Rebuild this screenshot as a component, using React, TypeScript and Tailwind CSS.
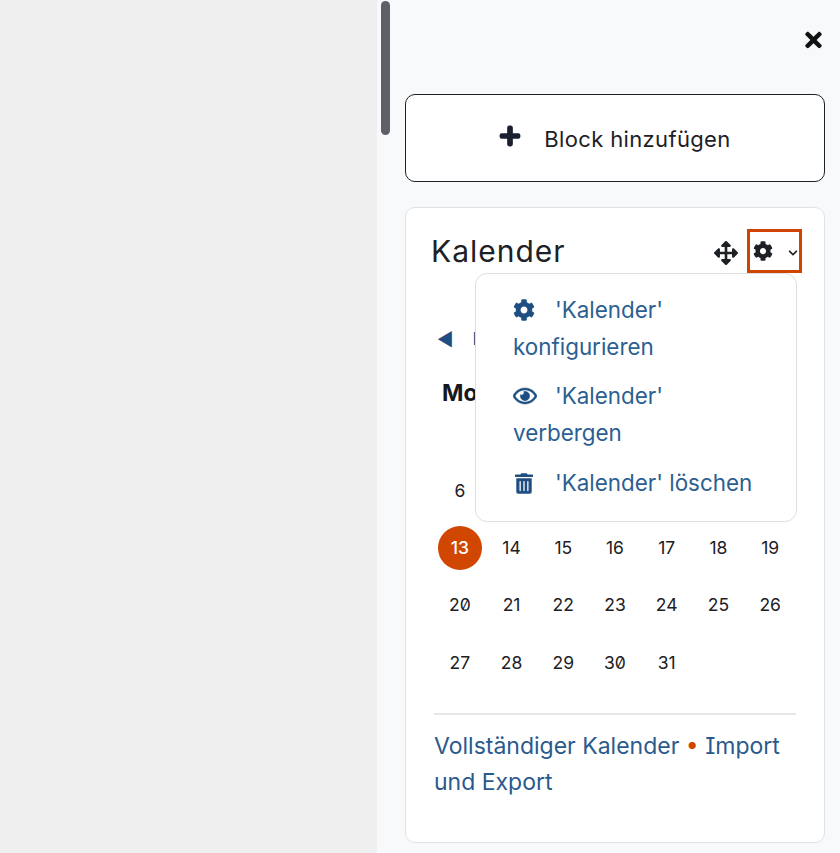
import { FaArrowsAlt, FaChevronDown, FaCog, FaPlus, FaRegEye, FaTimes, FaTrashAlt } from "react-icons/fa";

// only what shows past the open menu is filled in
const weeks = [
  ["", "", "", "", "", "", ""],
  ["6", "", "", "", "", "", ""],
  ["13", "14", "15", "16", "17", "18", "19"],
  ["20", "21", "22", "23", "24", "25", "26"],
  ["27", "28", "29", "30", "31", "", ""],
];

const days = ["Mo", "", "", "", "", "", ""];

export default function App() {
  return (
    <div className="flex h-[853px] w-[840px] overflow-hidden bg-[#efefef] font-['Inter',sans-serif] text-[#1d2125] [font-feature-settings:'cv08']">
      {/* Page behind the drawer */}
      <div className="w-[377px] shrink-0" />

      {/* Block drawer */}
      <aside className="relative flex-1 bg-[#f8f9fa] pl-7 pr-[15px]">
        <div className="absolute left-1 top-px h-[134px] w-[9px] rounded-full bg-[#5f5f68]" />

        <div className="flex h-[94px] justify-end pr-[3px] pt-[28px]">
          <FaTimes className="h-[24px] w-[17px] text-[#111]" />
        </div>

        <button className="flex h-[88px] w-full items-center justify-center gap-[23px] rounded-[10px] border border-[#1d2125] bg-white text-[22px] tracking-[0.35px] text-[#1d2125]">
          <FaPlus className="mb-1 h-[22px] w-[22px] text-[#1a2030]" stroke="currentColor" strokeWidth={36} />
          <span className="pt-0.5">Block hinzufügen</span>
        </button>

        <section className="relative mt-[25px] h-[636px] rounded-[10px] border border-[#dee2e6] bg-white pl-7 pr-7">
          {/* Header */}
          <div className="flex h-[65px] items-end justify-between">
            <h2 className="-ml-[3px] pb-[2px] text-[30px] font-normal leading-[40px] tracking-[1px]">Kalender</h2>
            <div className="-mr-[6px] flex items-center">
              <FaArrowsAlt className="mr-[9px] mt-[3px] h-6 w-6 text-[#1d2125]" />
              <div className="flex h-[44px] w-[55px] items-center border-[3px] border-[#cf4500] pl-[3px]">
                <FaCog className="h-5 w-5 text-[#1d2125]" />
                <FaChevronDown className="ml-[15px] mt-1 h-2.5 w-2.5 text-[#1d2125]" />
              </div>
            </div>
          </div>

          {/* Month navigation */}
          <div className="mt-[55px] flex h-6 items-center gap-[19px] pl-[3px] text-[17px] text-[#1f4f82]">
            <span className="text-[18px] leading-none">◄</span>
            <span>D</span>
          </div>

          {/* Calendar */}
          <div className="mt-[29px] grid w-[362px] grid-cols-7 text-center">
            {days.map((day, index) => (
              <div key={index} className="h-[24px] text-[23px] font-bold leading-[24px] text-[#16181b]">
                {day}
              </div>
            ))}
            {weeks.flat().map((date, index) => (
              <div key={index} className="flex h-[57.3px] items-center justify-center text-[17.5px] slashed-zero text-[#1d2125]">
                {date === "13" ? (
                  <span className="flex h-11 w-11 items-center justify-center rounded-full bg-[#d14600] font-medium text-white">
                    {date}
                  </span>
                ) : (
                  date
                )}
              </div>
            ))}
          </div>

          <div className="mt-[22px] border-t-2 border-[#e6e7e9] pt-[13px] text-[23px] leading-[36px] text-[#2a5a8c]">
            Vollständiger Kalender <span className="text-[#d14600]">•</span> Import und Export
          </div>

          {/* Dropdown menu */}
          <div className="absolute left-[69px] top-[65px] h-[249px] w-[322px] rounded-[12px] border-[1.5px] border-[#dddfe2] bg-white pl-[37px] pr-8 pt-[17px] text-[22.4px] leading-[37px] text-[#2c5f91]">
            <div>
              <FaCog className="mr-5 inline h-[22px] w-[22px] align-[-3px] text-[#1f4f82]" />
              'Kalender' konfigurieren
            </div>
            <div className="mt-3">
              <FaRegEye className="mr-[18px] inline h-[22px] w-6 align-[-3px] text-[#1f4f82]" stroke="currentColor" strokeWidth={12} />
              'Kalender' verbergen
            </div>
            <div className="mt-[13px] whitespace-nowrap">
              <FaTrashAlt className="ml-0.5 mr-[22px] inline h-[21px] w-[18px] align-[-3px] text-[#1f4f82]" />
              'Kalender' löschen
            </div>
          </div>
        </section>
      </aside>
    </div>
  );
}
